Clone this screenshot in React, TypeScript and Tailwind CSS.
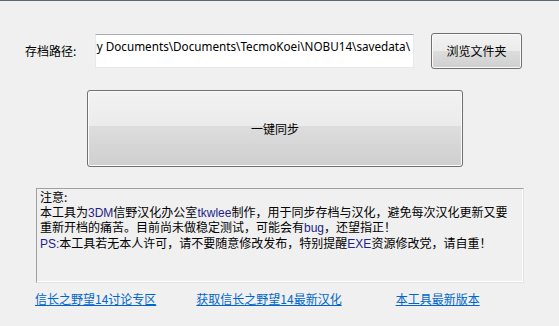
import React from "react";

const cjk = { fontFamily: '"Noto Sans CJK SC", "Noto Sans", sans-serif' };
const latin = { fontFamily: '"Noto Sans", "Noto Sans CJK SC", sans-serif' };

function L({ children }: { children: React.ReactNode }) {
  return (
    <span className="text-[#1c2488]" style={{ fontFamily: '"Liberation Sans", "Noto Sans", sans-serif' }}>
      {children}
    </span>
  );
}

export default function App() {
  return (
    <div
      className="w-[559px] h-[326px] bg-[#f0f0f0] border-t border-[#5b6779] flex flex-col text-black overflow-hidden"
      style={cjk}
    >
      {/* path row */}
      <div className="flex items-center mt-[32px]">
        <div className="ml-[25px] w-[70px] shrink-0 text-[12px] leading-[16px]">存档路径:</div>
        <div className="w-[319px] h-[34px] shrink-0 bg-white border border-[#e3e9ef] border-t-[#abadb3] flex justify-end overflow-hidden pr-[3px] pt-[3px]">
          <span className="whitespace-nowrap text-[11.7px] leading-[17px] text-black" style={latin}>
            C:\Users\Administrator\My Documents\Documents\TecmoKoei\NOBU14\savedata\
          </span>
        </div>
        <button className="ml-[17px] w-[91px] h-[36px] shrink-0 rounded-[3px] border border-[#707070] bg-[linear-gradient(to_bottom,#f2f2f2_0%,#ebebeb_50%,#dddddd_50%,#cfcfcf_100%)] shadow-[inset_0_0_0_1px_#fbfbfb] text-[12px] leading-[16px] flex items-center justify-center">
          浏览文件夹
        </button>
      </div>

      {/* sync button */}
      <button className="mt-[21px] ml-[87px] w-[376px] h-[77px] rounded-[3px] border border-[#707070] bg-[linear-gradient(to_bottom,#f2f2f2_0%,#ebebeb_47%,#dddddd_47%,#cfcfcf_100%)] shadow-[inset_0_0_0_1px_#fbfbfb] text-[12px] leading-[16px] flex items-center justify-center">
        一键同步
      </button>

      {/* note */}
      <div className="mt-[21px] ml-[36px] w-[488px] h-[95px] border border-[#a0a0a0] border-r-[#e3e3e3] border-b-[#e3e3e3] shadow-[inset_-1px_-1px_0_#ffffff] bg-[#f0f0f0] pl-[3px] pt-[1px] text-[12px] leading-[14.7px]">
        <div>注意:</div>
        <div className="whitespace-nowrap">
          本工具为<L>3DM</L>信野汉化办公室<L>tkwlee</L>制作，用于同步存档与汉化，避免每次汉化更新又要
        </div>
        <div className="whitespace-nowrap">
          重新开档的痛苦。目前尚未做稳定测试，可能会有<L>bug</L>，还望指正！
        </div>
        <div className="whitespace-nowrap">
          <L>PS:</L>本工具若无本人许可，请不要随意修改发布，特别提醒<L>EXE</L>资源修改党，请自重！
        </div>
      </div>

      {/* links */}
      <div className="mt-[8px] flex text-[12px] leading-[16px] text-[#0066cc]">
        <a href="#" className="ml-[35px] underline">信长之野望14讨论专区</a>
        <a href="#" className="ml-[40px] underline">获取信长之野望14最新汉化</a>
        <a href="#" className="ml-[54px] underline">本工具最新版本</a>
      </div>
    </div>
  );
}
